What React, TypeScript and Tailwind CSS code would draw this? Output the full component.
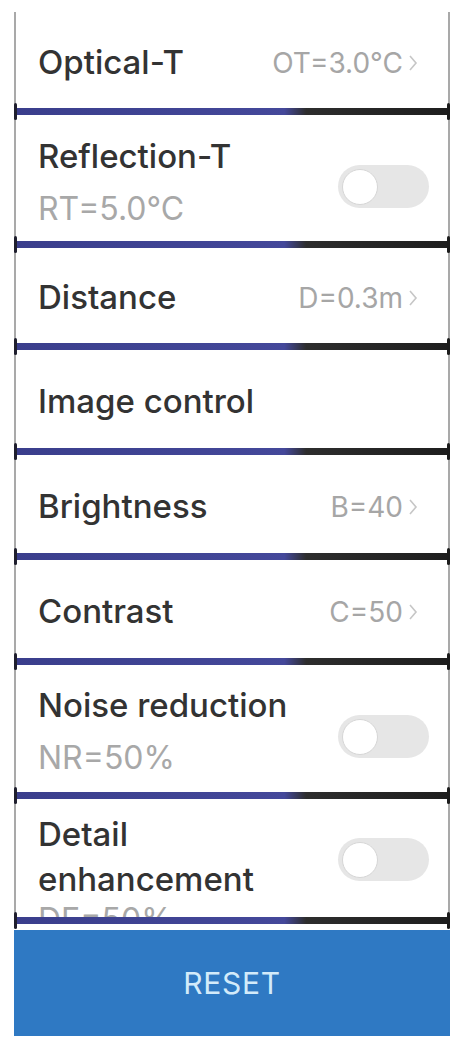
import React from 'react';

const Chevron: React.FC = () => (
  <svg width="10" height="20" viewBox="0 0 10 20" className="ml-[5px]">
    <polyline points="2,3 8,10 2,17" fill="none" stroke="#c6c6c6" strokeWidth="1.6" />
  </svg>
);

const Toggle: React.FC = () => (
  <div className="w-[91px] h-[43px] rounded-full bg-[#e6e6e6] flex items-center px-[4px] shrink-0">
    <div className="w-[36px] h-[36px] rounded-full bg-white border border-[#d6d6d6]" />
  </div>
);

const Divider: React.FC = () => (
  <div className="relative h-[7px] bg-[linear-gradient(to_right,#3a3e8c_0%,#44489a_62%,#2d2d2d_67%,#1e1e1e_100%)]">
    <span className="absolute left-0 -top-[5px] h-[17px] w-[3px] bg-[#1f1f2e] rounded-full" />
    <span className="absolute right-0 -top-[5px] h-[17px] w-[3px] bg-[#1c1c1c] rounded-full" />
  </div>
);

// single line row with value and chevron
const ValueRow: React.FC<{ label: string; value: string; h: string }> = ({ label, value, h }) => (
  <div className={`${h} flex items-center justify-between pl-[22px] pr-[30px] pt-[5px] border-x-2 border-[#a9a9a9] bg-white`}>
    <span className="text-[33px] text-[#333] font-medium">{label}</span>
    <span className="flex items-center text-[28px] text-[#a6a6a6]">
      {value}
      <Chevron />
    </span>
  </div>
);

const SwitchRow: React.FC<{ label: string; sub: string; h: string; pt: string }> = ({ label, sub, h, pt }) => (
  <div className={`${h} ${pt} flex items-start justify-between pl-[22px] pr-[19px] border-x-2 border-[#a9a9a9] bg-white`}>
    <div className="flex flex-col">
      <span className="text-[33px] leading-[36px] text-[#333] font-medium">{label}</span>
      <span className="text-[32px] leading-[36px] mt-[17px] text-[#a8a8a8]">{sub}</span>
    </div>
    <div className="self-center -mt-[6px]">
      <Toggle />
    </div>
  </div>
);

export default function App() {
  return (
    <div className="w-[462px] h-[1042px] bg-white font-['Inter',sans-serif] pt-[12px] pl-[14px] pr-[12px] flex flex-col">
      <div className="h-[918px] overflow-hidden flex flex-col">
        <ValueRow label="Optical-T" value="OT=3.0°C" h="h-[96px]" />
        <Divider />
        <SwitchRow label="Reflection-T" sub="RT=5.0°C" h="h-[126px]" pt="pt-[23px]" />
        <Divider />
        <ValueRow label="Distance" value="D=0.3m" h="h-[95px]" />
        <Divider />
        <div className="h-[98px] flex items-center pl-[22px] pt-[5px] border-x-2 border-[#a9a9a9] bg-white">
          <span className="text-[33px] text-[#333] font-medium">Image control</span>
        </div>
        <Divider />
        <ValueRow label="Brightness" value="B=40" h="h-[98px]" />
        <Divider />
        <ValueRow label="Contrast" value="C=50" h="h-[98px]" />
        <Divider />
        <SwitchRow label="Noise reduction" sub="NR=50%" h="h-[127px]" pt="pt-[22px]" />
        <Divider />
        <div className="h-[118px] shrink-0 overflow-hidden flex items-start justify-between pt-[13px] pl-[22px] pr-[19px] border-x-2 border-[#a9a9a9] bg-white">
          <div className="flex flex-col w-[270px]">
            <span className="text-[33px] leading-[45px] text-[#333] font-medium">Detail enhancement</span>
            <span className="text-[32px] leading-[36px] text-[#a8a8a8]">DE=50%</span>
          </div>
          <div className="mt-[26px]">
            <Toggle />
          </div>
        </div>
        <Divider />
      </div>
      <button className="h-[106px] w-full bg-[#2f79c3] text-[#d3ebfa] text-[30px] tracking-wide">
        RESET
      </button>
    </div>
  );
}
